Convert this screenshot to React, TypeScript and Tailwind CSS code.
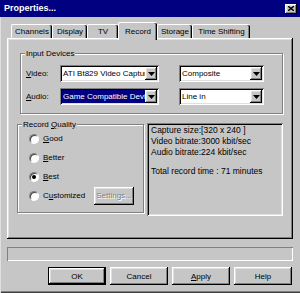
const raised =
  'shadow-[inset_-1px_-1px_0_#000,inset_1px_1px_0_#fff,inset_-2px_-2px_0_#808080,inset_2px_2px_0_#dfdfdf]'
const sunken =
  'shadow-[inset_1px_1px_0_#808080,inset_-1px_-1px_0_#fff,inset_2px_2px_0_#000,inset_-2px_-2px_0_#dfdfdf]'
const etched = 'border border-[#808080] shadow-[inset_1px_1px_0_#fff,1px_1px_0_#fff]'

const Arrow = () => (
  <svg width="7" height="4" viewBox="0 0 7 4">
    <polygon points="0,0 7,0 3.5,4" fill="#000" />
  </svg>
)

const Combo = ({
  value,
  className,
  selected,
}: {
  value: string
  className: string
  selected?: boolean
}) => (
  <div className={`flex h-[17px] bg-white p-[2px] ${sunken} ${className}`}>
    <div
      className={`flex min-w-0 flex-1 items-center overflow-hidden whitespace-nowrap pl-[1px] ${
        selected ? 'bg-[#000080] text-white' : ''
      }`}
    >
      {value}
    </div>
    <div className={`flex w-[12px] items-center justify-center bg-[#c6c6c6] ${raised}`}>
      <Arrow />
    </div>
  </div>
)

const Radio = ({ checked }: { checked?: boolean }) => (
  <div className="flex h-[10px] w-[10px] items-center justify-center rounded-full border border-b-white border-l-[#808080] border-r-white border-t-[#808080] bg-white shadow-[inset_1px_1px_0_#404040]">
    {checked && <div className="h-[4px] w-[4px] rounded-full bg-black" />}
  </div>
)

const Tab = ({ label, className }: { label: string; className: string }) => (
  <div
    className={`flex h-[14px] items-center justify-center rounded-t-[2px] border-l border-t border-white shadow-[inset_-1px_0_0_#000,inset_-2px_0_0_#808080] ${className}`}
  >
    {label}
  </div>
)

const Button = ({ children, isDefault }: { children: React.ReactNode; isDefault?: boolean }) => (
  <div
    className={`flex h-[18px] w-[58px] items-center justify-center ${
      isDefault ? 'border border-black' : ''
    }`}
  >
    <div className={`flex h-full w-full items-center justify-center ${raised}`}>{children}</div>
  </div>
)

export default function App() {
  return (
    <div className="flex h-[293px] w-[300px] flex-col overflow-hidden bg-[#c6c6c6] font-['Liberation_Sans',Arial,sans-serif] text-[8px] leading-[11px] text-black shadow-[inset_1px_0_0_#dfdfdf,inset_0_-1px_0_#404040,inset_0_-2px_0_#808080]">
      {/* title bar */}
      <div className="flex h-[17px] items-center justify-between bg-[#000080] pl-[4px] pr-[3px]">
        <span className="text-[9px] font-bold text-white">Properties...</span>
        <div className={`flex h-[10px] w-[12px] items-center justify-center bg-[#c6c6c6] ${raised}`}>
          <svg width="6" height="5" viewBox="0 0 6 5">
            <path d="M0 0 L6 5 M6 0 L0 5" stroke="#000" strokeWidth="1.4" />
          </svg>
        </div>
      </div>

      {/* tabs */}
      <div className="mt-[5px] flex h-[16px] items-end pl-[11px]">
        <Tab label="Channels" className="w-[41px]" />
        <Tab label="Display" className="w-[35px]" />
        <Tab label="TV" className="w-[31px]" />
        <div className="relative z-10 -mb-[2px] flex h-[18px] w-[39px] items-start justify-center rounded-t-[2px] border-l border-t border-white bg-[#c6c6c6] pt-[3px] shadow-[inset_-1px_0_0_#000,inset_-2px_0_0_#808080]">
          Record
        </div>
        <Tab label="Storage" className="w-[35px]" />
        <Tab label="Time Shifting" className="w-[58px]" />
      </div>

      {/* tab panel */}
      <div className={`ml-[7px] flex h-[201px] w-[286px] flex-col ${raised}`}>
        <div className={`relative ml-[13px] mt-[15px] h-[61px] w-[263px] ${etched}`}>
          <span className="absolute -top-[6px] left-[4px] bg-[#c6c6c6] px-[1px]">Input Devices</span>
          <div className="mt-[11px] flex items-center pl-[5px]">
            <span className="w-[34px]">
              <span className="underline">V</span>ideo:
            </span>
            <Combo value="ATI Bt829 Video Capture" className="w-[99px]" />
            <Combo value="Composite" className="ml-[20px] w-[85px]" />
          </div>
          <div className="mt-[6px] flex items-center pl-[5px]">
            <span className="w-[34px]">
              <span className="underline">A</span>udio:
            </span>
            <Combo value="Game Compatible Device" className="w-[99px]" selected />
            <Combo value="Line in" className="ml-[20px] w-[85px]" />
          </div>
        </div>

        <div className="ml-[10px] mt-[9px] flex items-start">
          <div className={`relative mt-[1px] flex h-[89px] w-[127px] flex-col pl-[11px] pr-[9px] pt-[4px] ${etched}`}>
            <span className="absolute -top-[6px] left-[4px] bg-[#c6c6c6] px-[1px]">
              Record <span className="underline">Q</span>uality
            </span>
            <div className="flex h-[19px] items-center gap-[4px]">
              <Radio />
              <span>
                <span className="underline">G</span>ood
              </span>
            </div>
            <div className="flex h-[19px] items-center gap-[4px]">
              <Radio />
              <span>
                <span className="underline">B</span>etter
              </span>
            </div>
            <div className="flex h-[19px] items-center gap-[4px]">
              <Radio checked />
              <span>
                <span className="underline">B</span>est
              </span>
            </div>
            <div className="flex h-[19px] items-center gap-[4px]">
              <Radio />
              <span>
                C<span className="underline">u</span>stomized
              </span>
              <div
                className={`ml-auto flex h-[18px] w-[40px] items-center justify-center overflow-hidden whitespace-nowrap text-[#808080] [text-shadow:1px_1px_0_#fff] ${raised}`}
              >
                Settings...
              </div>
            </div>
          </div>

          <div className={`ml-[3px] flex h-[93px] w-[136px] flex-col px-[4px] pt-[2px] text-[8.5px] ${sunken}`}>
            <span>Capture size:[320 x 240 ]</span>
            <span>Video bitrate:3000 kbit/sec</span>
            <span>Audio bitrate:224 kbit/sec</span>
            <span className="mt-[8px]">Total record time : 71 minutes</span>
          </div>
        </div>
      </div>

      {/* status bar */}
      <div className="ml-[7px] mt-[8px] h-[14px] w-[286px] shadow-[inset_1px_1px_0_#808080,inset_-1px_-1px_0_#fff]" />

      {/* buttons */}
      <div className="mt-[6px] flex gap-[4px] pl-[48px]">
        <Button isDefault>OK</Button>
        <Button>Cancel</Button>
        <Button>
          <span>
            <span className="underline">A</span>pply
          </span>
        </Button>
        <Button>Help</Button>
      </div>
    </div>
  )
}
